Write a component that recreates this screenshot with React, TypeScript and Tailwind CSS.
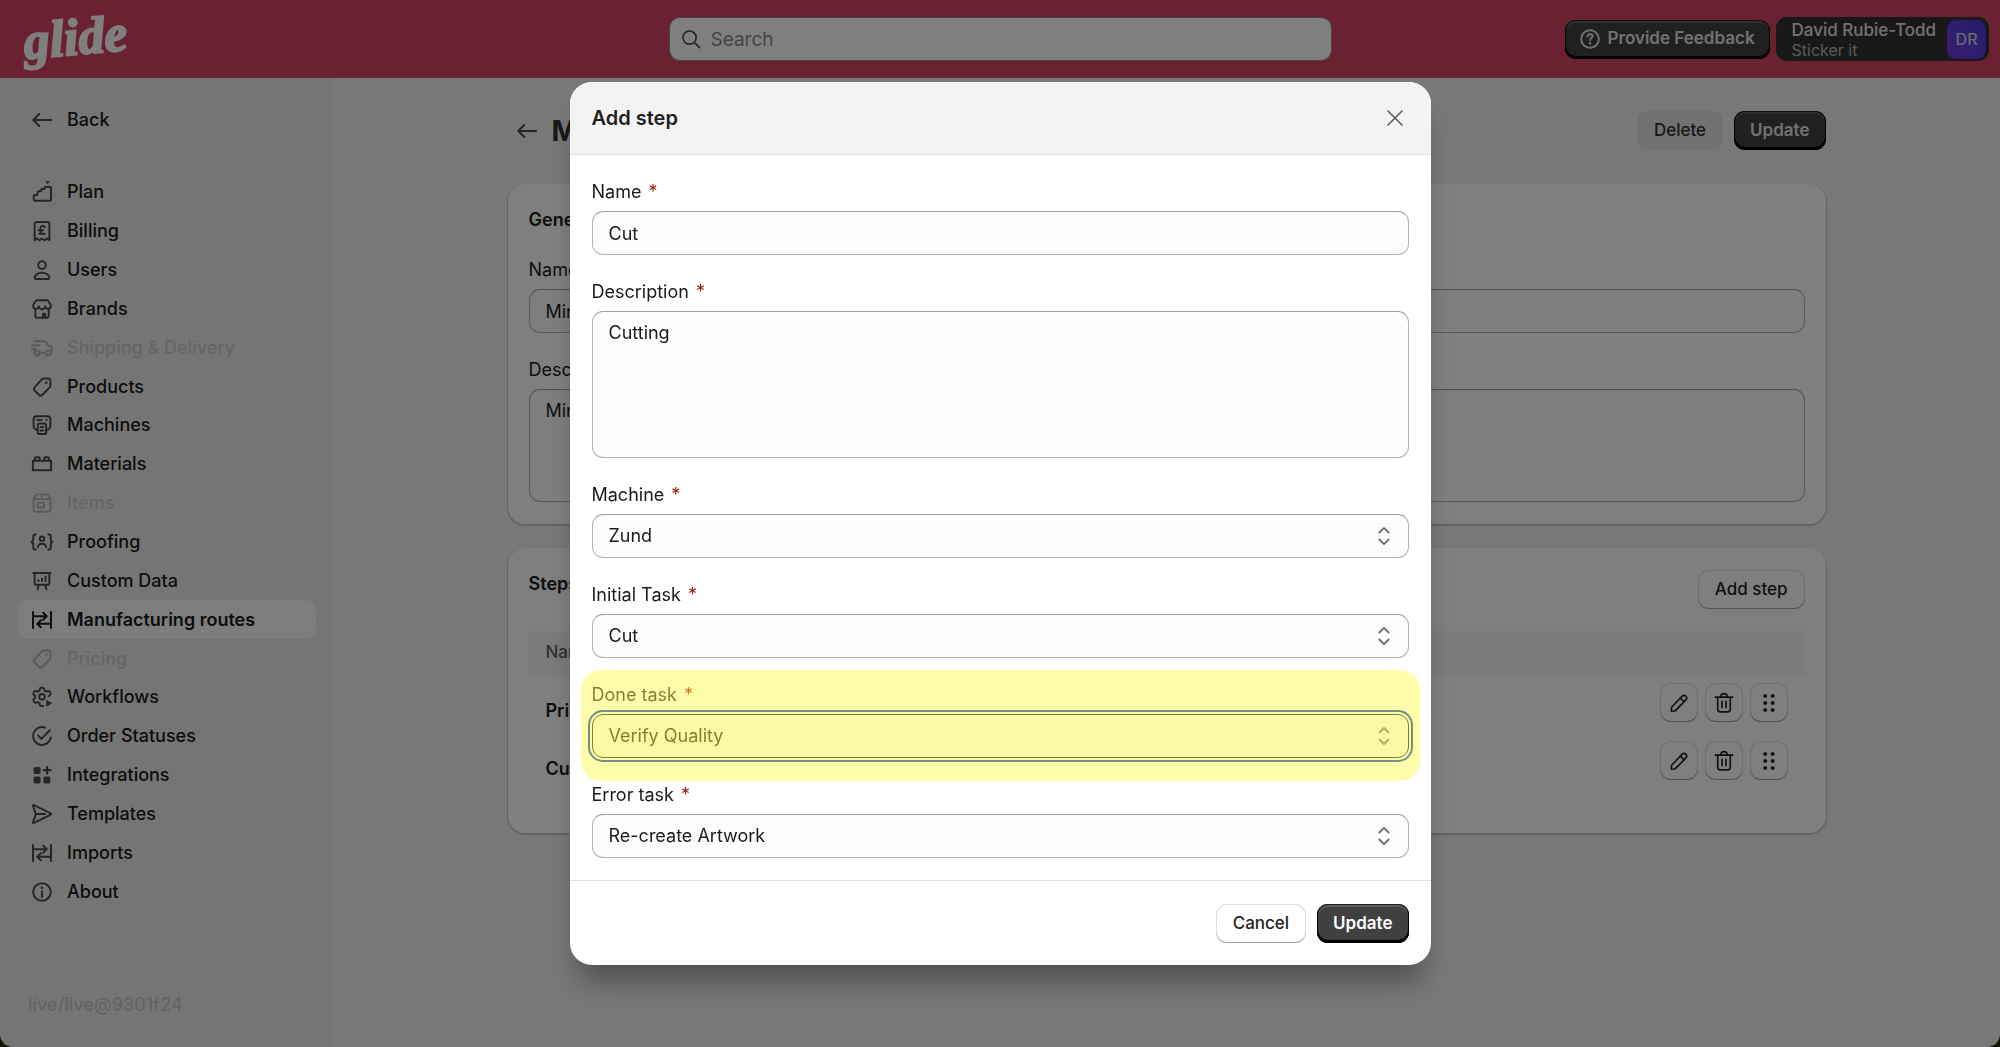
import type { ReactNode, SelectHTMLAttributes } from "react";
import { useState } from "react";
import clsx from "clsx";

type IconName =
  | "back"
  | "plan"
  | "billing"
  | "user"
  | "store"
  | "truck"
  | "tag"
  | "machine"
  | "brick"
  | "box"
  | "proof"
  | "board"
  | "routes"
  | "workflow"
  | "check"
  | "apps"
  | "send"
  | "info"
  | "question"
  | "search"
  | "close"
  | "select"
  | "edit"
  | "trash"
  | "drag";

const solid = { fill: "currentColor", stroke: "none" };

// All icons are drawn on a 20 x 20 grid
const icons: Record<IconName, ReactNode> = {
  back: <path d="M16.500 10H4M8 5.750 3.750 10 8 14.250" />,
  plan: (
    <>
      <path d="M4.100 15.500v-2.600c0-.4.3-.7.7-.7h2v-2c0-.4.3-.7.7-.7h1.800v-.9c0-.4.3-.7.7-.7h1.700v-.8c0-.4.3-.7.7-.7h3.100c.6 0 1 .4 1 1v8.100c0 .4-.3.7-.7.700H4.800a.7.7 0 0 1-.7-.7z" />
      <path d="M12.400 2.200h3.200l-1.600 2.200z" {...solid} />
    </>
  ),
  billing: (
    <>
      <path d="M4.750 16.500V4.750c0-.8.600-1.250 1.250-1.250h8c.650 0 1.250.500 1.250 1.250V16.500l-1.800-1.200-1.750 1.300-1.700-1.300-1.700 1.300-1.750-1.300z" />
      <path d="M12 7.200a1.700 1.700 0 0 0-3.200.8c0 1.300.7 2.100.2 3.300-.2.4-.5.700-1 .700h4M7.500 9.400h3.300" />
    </>
  ),
  user: (
    <>
      <circle cx="10" cy="6.500" r="2.750" />
      <path d="M4.750 15.500c0-1.900 2.300-3.600 5.250-3.600s5.250 1.700 5.250 3.600c0 .5-.4.900-.9.900H5.650a.9.900 0 0 1-.9-.900z" />
    </>
  ),
  store: (
    <>
      <path d="M6 3.750h8L16.250 7v.75a2 2 0 0 1-4 .250 2.200 2.200 0 0 1-4.500 0 2 2 0 0 1-4-.25V7z" />
      <path d="M5.250 10v5.250c0 .55.45 1 1 1h7.500c.55 0 1-.45 1-1V10" />
      <path d="M10.750 16v-2.700h1.500V16" />
    </>
  ),
  truck: (
    <>
      <path d="M4.500 5.250h7.300c.5 0 .9.250 1.100.7l1.200 2.200 2 .8c.6.2.9.7.9 1.200v2c0 .6-.3 1-.9 1.100M8.300 13.400h4.300M2.800 8h5.400M2.800 10.600h3M4.500 10.600v2.200" />
      <circle cx="6.500" cy="13.500" r="1.700" />
      <circle cx="14.500" cy="13.500" r="1.700" />
    </>
  ),
  tag: (
    <>
      <path d="M11 4h3.250c.95 0 1.750.8 1.750 1.750V9c0 .5-.2.950-.5 1.250l-5.200 5.300c-.7.700-1.750.700-2.450 0l-3-3c-.7-.7-.7-1.750 0-2.450l5-5.550C10.150 4.200 10.600 4 11 4z" />
      <circle cx="13" cy="7" r=".9" {...solid} />
    </>
  ),
  machine: (
    <>
      <path d="M7 13.500c-1.700 0-3-1.300-3-3V6c0-1.300 1-2.250 2.250-2.250h7.500C15 3.750 16 4.700 16 6v4.500c0 1.700-1.300 3-3 3" />
      <rect x="7" y="9" width="6" height="7.500" rx="1.200" />
      <path d="M6.700 6.500h3M9 11.500h2M9 13.900h2" />
      <circle cx="13.200" cy="6.500" r=".8" {...solid} />
    </>
  ),
  brick: (
    <>
      <path d="M3.500 7.750h13v6.750h-13z" />
      <path d="M5 7.500V6c0-.4.300-.75.750-.75h1.750c.4 0 .75.300.75.750v1.500M11.700 7.500V6c0-.4.300-.75.750-.750h1.800c.4 0 .75.300.75.750v1.500" />
    </>
  ),
  box: (
    <>
      <path d="M4 7.200v7.500c0 .85.650 1.500 1.500 1.500h9c.85 0 1.500-.650 1.500-1.500V7.200M4 7.200l1.500-2.600c.25-.5.750-.75 1.250-.75h6.500c.5 0 1 .25 1.250.75L16 7.200zM10 4v3" />
      <rect x="6.900" y="9.750" width="4.500" height="3.500" rx=".4" />
    </>
  ),
  proof: (
    <>
      <path d="M5.500 4.600H5c-.7 0-1.250.6-1.250 1.250v2.400c0 .9-.4 1.400-1.150 1.750.75.350 1.150.85 1.150 1.750v2.400c0 .7.550 1.250 1.250 1.250h.5M14.500 4.600h.5c.7 0 1.250.6 1.250 1.250v2.400c0 .9.400 1.400 1.150 1.750-.75.350-1.150.85-1.150 1.750v2.400c0 .7-.550 1.250-1.250 1.250h-.5" />
      <circle cx="10" cy="7.600" r="1.600" />
      <path d="M7 13.700c.3-1.500 1.500-2.500 3-2.500s2.700 1 3 2.500" />
    </>
  ),
  board: (
    <path d="M3.800 4.250h12.400M4.750 4.500v6.700c0 .8.700 1.500 1.500 1.500h7.500c.8 0 1.500-.7 1.500-1.500V4.500M7.600 13l-.7 3M12.400 13l.7 3M7.500 9.500v.7M10 8.200v2M12.500 6.700v3.500" />
  ),
  routes: (
    <path d="M3.600 4.250v11.500M16.400 4.250v11.500M3.700 7.250h9.500M10.800 4.700l2.600 2.550-2.600 2.600M16.300 12.750H6.800M9.200 10.200l-2.600 2.550 2.600 2.550" />
  ),
  workflow: (
    <>
      <path d="M10.800 16.400H9.300c-.4 0-.7-.3-.8-.7l-.3-1.300-1.300-.7-1.300.4c-.4.100-.8 0-1-.4l-.7-1.200c-.2-.4-.1-.8.200-1.100l1-.9V9.300l-1-.9c-.3-.3-.4-.7-.2-1.100l.7-1.200c.2-.4.600-.5 1-.4l1.300.4 1.300-.7.300-1.300c.1-.4.4-.7.8-.7h1.400c.4 0 .7.300.8.700l.3 1.300 1.300.7 1.300-.4c.4-.1.8 0 1 .4l.7 1.200c.2.4.1.8-.2 1.100l-1.200 1.100" />
      <circle cx="10" cy="9.900" r="2" />
      <path d="M13 11.900v5l4.300-2.500z" {...solid} />
    </>
  ),
  check: (
    <path d="M12.300 4A6.400 6.400 0 1 0 16.300 11M7.300 9.700l2.300 2.400 6-6.200" />
  ),
  apps: (
    <g {...solid}>
      <rect x="4" y="4.200" width="5" height="5" rx="1.200" />
      <rect x="4" y="11" width="5" height="5" rx="1.200" />
      <rect x="11" y="11" width="5" height="5" rx="1.200" />
      <path d="M12.900 3.500h1.500v2.300h2.300v1.600h-2.300v2.300h-1.500V7.400h-2.300V5.800h2.300z" />
    </g>
  ),
  send: (
    <path d="M3.600 4.200c-.1-.5.300-.7.700-.6l12 5.900c.4.200.4.800 0 1l-12 5.900c-.4.200-.8-.1-.7-.6L5.600 10zM5.700 10h6.500" />
  ),
  info: (
    <>
      <circle cx="10" cy="10" r="6.300" />
      <path d="M10 9.500v4" />
      <circle cx="10" cy="7" r=".9" {...solid} />
    </>
  ),
  question: (
    <>
      <circle cx="10" cy="10" r="6.300" />
      <path d="M8.200 8.200c.1-1 .8-1.600 1.800-1.600s1.800.7 1.800 1.600c0 1.300-1.800 1.300-1.800 2.700" />
      <circle cx="10" cy="13" r=".9" {...solid} />
    </>
  ),
  search: (
    <>
      <circle cx="9" cy="9" r="4.700" />
      <path d="m12.500 12.500 3.500 3.600" />
    </>
  ),
  close: <path d="m5 5 10 10M15 5 5 15" />,
  select: <path d="m6.700 7.500 3.300-3.200 3.300 3.200M6.700 12.500l3.300 3.200 3.300-3.200" />,
  edit: (
    <>
      <path d="M12.200 5.200c.8-.8 2-.8 2.700 0 .7.700.7 1.900 0 2.600l-7.100 7.300c-.3.300-.7.500-1.200.6l-2.100.2.200-2.300c0-.4.200-.8.500-1.100z" />
      <path d="m11 6.500 2.500 2.500" />
    </>
  ),
  trash: (
    <path d="M3.800 5.750h12.400M7.700 5.500c0-1.300 1-2.200 2.300-2.200s2.300.9 2.300 2.200M5.500 6v8.300c0 1.200.8 2 2 2h5c1.200 0 2-.8 2-2V6M8.600 8.750v4.500M11.400 8.750v4.500" />
  ),
  drag: (
    <g {...solid}>
      <rect x="6" y="3.700" width="2.600" height="2.600" rx=".9" />
      <rect x="6" y="8.700" width="2.600" height="2.600" rx=".9" />
      <rect x="6" y="13.700" width="2.600" height="2.600" rx=".9" />
      <rect x="11.300" y="3.700" width="2.600" height="2.600" rx=".9" />
      <rect x="11.300" y="8.700" width="2.600" height="2.600" rx=".9" />
      <rect x="11.300" y="13.700" width="2.600" height="2.600" rx=".9" />
    </g>
  ),
};

function Icon({ name, className }: { name: IconName; className?: string }) {
  const thin = name === "close" || name === "search" || name === "trash" || name === "edit";

  return (
    <svg
      viewBox="0 0 20 20"
      fill="none"
      stroke="currentColor"
      strokeWidth={thin ? 1.2 : 1.4}
      strokeLinecap="round"
      strokeLinejoin="round"
      aria-hidden="true"
      className={clsx("size-7 shrink-0", className)}
    >
      {icons[name]}
    </svg>
  );
}

function Logo() {
  return (
    <svg viewBox="0 0 120 78" className="h-[78px] w-[120px] text-white" role="img" aria-label="glide">
      <text
        x="3"
        y="59"
        transform="rotate(-5 3 59)"
        fill="currentColor"
        stroke="currentColor"
        strokeWidth="2"
        fontSize="52"
        fontWeight="700"
        fontStyle="italic"
        fontFamily="'Liberation Serif', serif"
      >
        glide
      </text>
    </svg>
  );
}

const navItems: { label: string; icon: IconName; disabled?: boolean; active?: boolean }[] = [
  { label: "Plan", icon: "plan" },
  { label: "Billing", icon: "billing" },
  { label: "Users", icon: "user" },
  { label: "Brands", icon: "store" },
  { label: "Shipping & Delivery", icon: "truck", disabled: true },
  { label: "Products", icon: "tag" },
  { label: "Machines", icon: "machine" },
  { label: "Materials", icon: "brick" },
  { label: "Items", icon: "box", disabled: true },
  { label: "Proofing", icon: "proof" },
  { label: "Custom Data", icon: "board" },
  { label: "Manufacturing routes", icon: "routes", active: true },
  { label: "Pricing", icon: "tag", disabled: true },
  { label: "Workflows", icon: "workflow" },
  { label: "Order Statuses", icon: "check" },
  { label: "Integrations", icon: "apps" },
  { label: "Templates", icon: "send" },
  { label: "Imports", icon: "routes" },
  { label: "About", icon: "info" },
];

const fieldBase = "w-full rounded-[11px] border px-4 text-lg leading-7 text-[#1a1a1a]";

const fieldClass = clsx(fieldBase, "border-[#b4b4b4] border-t-[#a0a0a0] bg-[#fdfdfd]");

const focusedFieldClass = clsx(
  fieldBase,
  "border-[#1a1a1a] bg-[#f8f8f8] outline-2 outline-offset-2 outline-[#0038c1]"
);

const darkButton =
  "rounded-[11px] bg-[#404040] font-semibold shadow-[inset_0_-2px_0_1px_#000,inset_0_0_0_1px_#222,inset_0_2px_0_1px_#5c5c5c]";

const lightButton =
  "rounded-[11px] bg-white font-medium text-[#1f1f1f] shadow-[inset_0_-1px_0_0_#a8a8a8,inset_0_0_0_1px_#dedede]";

function Label({ htmlFor, children, required }: { htmlFor: string; children: ReactNode; required?: boolean }) {
  return (
    <label htmlFor={htmlFor} className="mb-[5px] block pt-px text-lg leading-7 text-[#1a1a1a]">
      {children}
      {required && <span className="ml-[7px] text-[#8e1f0b]">*</span>}
    </label>
  );
}

type SelectFieldProps = SelectHTMLAttributes<HTMLSelectElement> & {
  id: string;
  label: string;
  options: string[];
  focused?: boolean;
};

function SelectField({ id, label, options, focused, ...rest }: SelectFieldProps) {
  return (
    <div className="relative">
      <Label htmlFor={id} required>
        {label}
      </Label>
      <div className="relative">
        <select id={id} className={clsx(focused ? focusedFieldClass : fieldClass, "block h-11 appearance-none")} {...rest}>
          {options.map((option) => (
            <option key={option}>{option}</option>
          ))}
        </select>
        <Icon name="select" className="pointer-events-none absolute top-2 right-[11px] text-[#757575]" />
      </div>
      {/* marker over the current field */}
      {focused && (
        <div className="pointer-events-none absolute -inset-x-[11px] -top-[10px] -bottom-[23px] rounded-[20px] bg-[#fffa42]/45" />
      )}
    </div>
  );
}

function TopBar() {
  return (
    <header className="flex h-[78px] items-center bg-[#d44464] px-[11px]">
      <div className="flex-1">
        <a href="#" className="ml-[11px] inline-block align-top">
          <Logo />
        </a>
      </div>
      <div className="relative w-[663px]">
        <Icon name="search" className="absolute top-2 left-2 text-[#4a4a4a]" />
        <input
          type="search"
          aria-label="Search"
          placeholder="Search"
          className="block h-11 w-full rounded-[11px] border border-[#8a8a8a] bg-white pr-4 pl-[41px] text-[19px] placeholder:text-[#8a8a8a]"
        />
      </div>
      <div className="flex flex-1 items-center justify-end gap-1.5">
        <button className={clsx(darkButton, "flex h-[39px] items-center gap-1 pr-[15px] pl-[11px] text-[17px] text-[#e3e3e3]")}>
          <Icon name="question" />
          Provide Feedback
        </button>
        <button className="flex h-11 items-center gap-[11px] rounded-[11px] bg-[#303030] pr-[3px] pl-4 text-left text-[#e3e3e3]">
          <span>
            <span className="block text-[17px] leading-[22px] font-medium">David Rubie-Todd</span>
            <span className="block text-base leading-[18px] text-[#b5b5b5]">Sticker it</span>
          </span>
          <span className="flex size-[39px] items-center justify-center rounded-[9px] bg-linear-to-tr from-[#7a2fd8] via-[#5b3fe0] to-[#4436c8] text-base">
            DR
          </span>
        </button>
      </div>
    </header>
  );
}

function Sidebar() {
  return (
    <aside className="flex w-[333px] shrink-0 flex-col bg-[#ebebeb] px-[17px] pt-[22px] text-lg font-medium text-[#1a1a1a]">
      <a href="#" className="flex h-[39px] items-center gap-[11px] pl-[11px]">
        <Icon name="back" className="text-[#4a4a4a]" />
        Back
      </a>
      <nav className="mt-[34px] grid h-[738px] auto-rows-fr">
        {navItems.map((item) => (
          <a
            key={item.label}
            href="#"
            aria-disabled={item.disabled}
            className={clsx(
              "flex items-center gap-[11px] rounded-[11px] pl-[11px]",
              item.disabled && "text-[#cbcbcb]",
              item.active && "bg-[#fafafa] font-semibold"
            )}
          >
            <Icon
              name={item.icon}
              className={item.disabled ? "text-[#b5b5b5]" : item.active ? "text-[#1a1a1a]" : "text-[#4a4a4a]"}
            />
            {item.label}
          </a>
        ))}
      </nav>
      <p className="mt-auto mb-7 pl-[11px] leading-7 text-[#c8c8c8]">live/live@9301f24</p>
    </aside>
  );
}

function RoutePage() {
  const cardClass = "rounded-[17px] bg-white px-[21px] shadow-[0_1px_1px_1px_#c9c9c9]";
  const iconButton = clsx(lightButton, "flex h-[39px] w-[38px] items-center justify-center");

  return (
    <main className="flex-1 bg-[#f1f1f1] px-6 pt-[33px]">
      <div className="mx-auto max-w-[1318px]">
        <div className="flex h-[39px] items-center gap-[11px]">
          <button aria-label="Go back" className="ml-[5px]">
            <Icon name="back" className="text-[#4a4a4a]" />
          </button>
          <h1 className="flex-1 text-[28px] leading-8 font-bold text-[#303030]">Mini</h1>
          <button className="h-[39px] rounded-[11px] bg-[#e3e3e3] px-[17px] text-[17px] font-medium text-[#303030]">
            Delete
          </button>
          <button className={clsx(darkButton, "h-[39px] px-4 text-[17px] text-[#e3e3e3]")}>Update</button>
        </div>

        {/* General */}
        <section className={clsx(cardClass, "mt-[34px] py-[22px]")}>
          <h2 className="text-lg leading-7 font-semibold text-[#1a1a1a]">General</h2>
          <div className="mt-[21px]">
            <Label htmlFor="route-name">Name</Label>
            <input id="route-name" defaultValue="Mini" className={clsx(fieldClass, "block h-11")} />
          </div>
          <div className="mt-[22px]">
            <Label htmlFor="route-description">Description</Label>
            <textarea
              id="route-description"
              defaultValue="Mini"
              className={clsx(fieldClass, "block h-[113px] resize-none pt-[7px]")}
            />
          </div>
        </section>

        {/* Steps */}
        <section className={clsx(cardClass, "mt-6 pt-[22px] pb-[42px]")}>
          <div className="flex items-start justify-between">
            <h2 className="text-lg leading-7 font-semibold text-[#1a1a1a]">Steps</h2>
            <button className={clsx(lightButton, "h-[39px] px-[17px] text-[17px]")}>Add step</button>
          </div>
          <table className="mt-[22px] w-full text-left">
            <thead>
              <tr className="h-11 bg-[#f7f7f7]">
                <th className="pl-[17px] text-[17px] font-medium text-[#616161]">Name</th>
                <th aria-label="Actions" />
              </tr>
            </thead>
            <tbody>
              {["Print", "Cut"].map((step) => (
                <tr key={step} className="h-[58px]">
                  <td className="pb-2 pl-[17px] align-bottom text-lg leading-7 font-semibold text-[#1a1a1a]">{step}</td>
                  <td className="pt-2 pr-[17px] align-top">
                    <div className="flex justify-end gap-[7px]">
                      <button aria-label={`Edit ${step}`} className={iconButton}>
                        <Icon name="edit" />
                      </button>
                      <button aria-label={`Delete ${step}`} className={iconButton}>
                        <Icon name="trash" />
                      </button>
                      <button aria-label={`Move ${step}`} className={iconButton}>
                        <Icon name="drag" />
                      </button>
                    </div>
                  </td>
                </tr>
              ))}
            </tbody>
          </table>
        </section>
      </div>
    </main>
  );
}

function AddStepDialog() {
  const [form, setForm] = useState({ name: "Cut", description: "Cutting" });

  return (
    <div
      role="dialog"
      aria-modal="true"
      aria-labelledby="dialog-title"
      className="w-full max-w-[861px] overflow-hidden rounded-[22px] bg-white shadow-[0_24px_28px_-8px_rgba(0,0,0,0.35)]"
    >
      <div className="flex h-[73px] items-center justify-between border-b border-[#e3e3e3] bg-[#f3f3f3] px-[22px]">
        <h2 id="dialog-title" className="text-xl font-semibold text-[#1f1f1f]">
          Add step
        </h2>
        <button aria-label="Close">
          <Icon name="close" className="text-[#616161]" />
        </button>
      </div>

      <form className="flex flex-col gap-[22px] p-[22px]">
        <div>
          <Label htmlFor="step-name" required>
            Name
          </Label>
          <input
            id="step-name"
            value={form.name}
            onChange={(e) => setForm({ ...form, name: e.target.value })}
            className={clsx(fieldClass, "block h-11")}
          />
        </div>
        <div>
          <Label htmlFor="step-description" required>
            Description
          </Label>
          <textarea
            id="step-description"
            value={form.description}
            onChange={(e) => setForm({ ...form, description: e.target.value })}
            className={clsx(fieldClass, "block h-[147px] resize-none pt-[7px]")}
          />
        </div>
        <SelectField id="machine" label="Machine" options={["Zund"]} />
        <SelectField id="initial-task" label="Initial Task" options={["Cut"]} />
        <SelectField id="done-task" label="Done task" options={["Verify Quality"]} focused />
        <SelectField id="error-task" label="Error task" options={["Re-create Artwork"]} />
      </form>

      <div className="flex justify-end gap-[11px] border-t border-[#e3e3e3] px-[22px] pt-[23px] pb-[22px]">
        <button className={clsx(lightButton, "h-[39px] px-[17px] text-[17px]")}>Cancel</button>
        <button className={clsx(darkButton, "h-[39px] px-4 text-[17px] text-white")}>Update</button>
      </div>
    </div>
  );
}

export default function App() {
  return (
    <div className="bg-[#20280f] font-[Inter,sans-serif]">
      <div className="relative flex min-h-screen flex-col overflow-hidden rounded-b-[13px]">
        <TopBar />
        <div className="flex flex-1">
          <Sidebar />
          <RoutePage />
        </div>
      </div>
      <div className="fixed inset-0 z-10 flex items-center justify-center bg-black/50">
        <AddStepDialog />
      </div>
    </div>
  );
}
